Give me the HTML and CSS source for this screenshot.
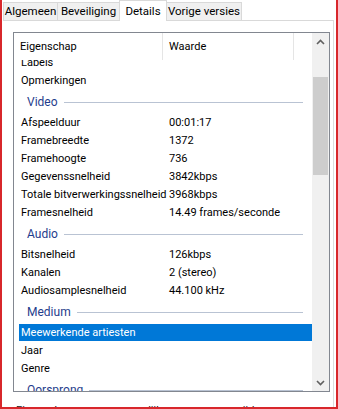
FILE: index.html
```html
<!DOCTYPE html>
<html lang="nl">
<head>
    <meta charset="UTF-8">
    <meta name="viewport" content="width=device-width, initial-scale=1.0">
    <title>Eigenschappen - Details</title>
    <link rel="stylesheet" href="styles.css">
</head>
<body>
    <div class="frame">
        <div class="tabs">
            <div class="tab tab-algemeen">Algemeen</div>
            <div class="tab tab-beveiliging">Beveiliging</div>
            <div class="tab tab-details active">Details</div>
            <div class="tab tab-vorige">Vorige versies</div>
        </div>
        <div class="panel">
            <div class="list">
                <div class="list-main">
                    <div class="header">
                        <div class="hcell">Eigenschap</div>
                        <div class="hcell hcell-value">Waarde</div>
                    </div>
                    <div class="rows">
                        <div class="rows-inner">
                            <div class="row"><span class="name">Labels</span><span class="value"></span></div>
                            <div class="row"><span class="name">Opmerkingen</span><span class="value"></span></div>

                            <div class="group"><span class="group-title">Video</span><span class="group-line"></span></div>
                            <div class="row"><span class="name">Afspeelduur</span><span class="value">00:01:17</span></div>
                            <div class="row"><span class="name">Framebreedte</span><span class="value">1372</span></div>
                            <div class="row"><span class="name">Framehoogte</span><span class="value">736</span></div>
                            <div class="row"><span class="name">Gegevenssnelheid</span><span class="value">3842kbps</span></div>
                            <div class="row"><span class="name">Totale bitverwerkingssnelheid</span><span class="value">3968kbps</span></div>
                            <div class="row"><span class="name">Framesnelheid</span><span class="value">14.49 frames/seconde</span></div>

                            <div class="group"><span class="group-title">Audio</span><span class="group-line"></span></div>
                            <div class="row"><span class="name">Bitsnelheid</span><span class="value">126kbps</span></div>
                            <div class="row"><span class="name">Kanalen</span><span class="value">2 (stereo)</span></div>
                            <div class="row"><span class="name">Audiosamplesnelheid</span><span class="value">44.100 kHz</span></div>

                            <div class="group"><span class="group-title">Medium</span><span class="group-line"></span></div>
                            <div class="row selected"><span class="name">Meewerkende artiesten</span><span class="value"></span></div>
                            <div class="row"><span class="name">Jaar</span><span class="value"></span></div>
                            <div class="row"><span class="name">Genre</span><span class="value"></span></div>

                            <div class="group"><span class="group-title">Oorsprong</span><span class="group-line"></span></div>
                        </div>
                    </div>
                </div>
                <div class="scrollbar">
                    <div class="sb-button">
                        <svg width="9" height="6" viewBox="0 0 9 6"><polyline points="1,5 4.5,1.5 8,5" fill="none" stroke="#606060" stroke-width="1.6"/></svg>
                    </div>
                    <div class="sb-track">
                        <div class="sb-thumb"></div>
                    </div>
                    <div class="sb-button">
                        <svg width="9" height="6" viewBox="0 0 9 6"><polyline points="1,1 4.5,4.5 8,1" fill="none" stroke="#606060" stroke-width="1.6"/></svg>
                    </div>
                </div>
            </div>
            <div class="remove-link">Eigenschappen en persoonlijke gegevens verwijderen</div>
        </div>
    </div>
</body>
</html>
```

FILE: styles.css
```css
body {
    margin: 0;
    font-family: Roboto, "Liberation Sans", sans-serif;
    font-size: 11px;
    color: #000;
    background: #fff;
}

.frame {
    width: 338px;
    height: 409px;
    box-sizing: border-box;
    border: 2px solid #d8272b;
    border-top: none;
    padding: 0 0 0 1px;
    overflow: hidden;
    background: #fff;
    display: flex;
    flex-direction: column;
}

/* tab strip */
.tabs {
    display: flex;
    align-items: flex-end;
    height: 20px;
    flex-shrink: 0;
}

.tab {
    height: 18px;
    box-sizing: border-box;
    border: 1px solid #d9d9d9;
    border-bottom: none;
    background: #f0f0f0;
    margin-right: -1px;
    line-height: 17px;
    text-align: center;
    white-space: nowrap;
    font-size: 11.5px;
}

.tab-algemeen { width: 55px; }
.tab-beveiliging { width: 63px; }
.tab-details { width: 48px; }
.tab-vorige { width: 76px; }

.tab.active {
    height: 21px;
    margin-bottom: -1px;
    background: #fff;
    position: relative;
    z-index: 1;
    line-height: 20px;
    padding-bottom: 2px;
}

/* tab page */
.panel {
    flex: 1;
    border-top: 1px solid #d9d9d9;
    border-right: 1px solid #dcdcdc;
    margin-right: 2px;
    padding: 11px 3px 0 10px;
    display: flex;
    flex-direction: column;
}

.list {
    height: 360px;
    box-sizing: border-box;
    border: 1px solid #828790;
    display: flex;
    flex-shrink: 0;
}

.list-main {
    flex: 1;
    display: flex;
    flex-direction: column;
    min-width: 0;
}

.header {
    height: 27px;
    display: grid;
    grid-template-columns: 149px 131px;
    flex-shrink: 0;
    background: #fff;
}

.hcell {
    padding-left: 6px;
    line-height: 27px;
    border-right: 1px solid #e5e5e5;
}

.hcell-value {
    padding-left: 6px;
}

.rows {
    flex: 1;
    overflow: hidden;
}

.rows-inner {
    margin-top: -6px;
    padding-left: 5px;
}

.row {
    display: grid;
    grid-template-columns: 144px 132px;
    height: 17px;
    margin-bottom: 1px;
    line-height: 17px;
    white-space: nowrap;
}

.row .name {
    padding-left: 2px;
}

.row .value {
    padding-left: 6px;
}

.row.selected {
    background: #0078d7;
    color: #fff;
}

.group {
    height: 24px;
    display: flex;
    align-items: center;
    width: 284px;
    padding-left: 8px;
    box-sizing: border-box;
}

.group-title {
    color: #1f3d8c;
    font-size: 12px;
    margin-right: 6px;
}

.group-line {
    flex: 1;
    height: 1px;
    background: #b9c3d3;
    margin-top: 1px;
}

/* vertical scrollbar */
.scrollbar {
    width: 17px;
    background: #f0f0f0;
    display: flex;
    flex-direction: column;
}

.sb-button {
    height: 17px;
    display: flex;
    align-items: center;
    justify-content: center;
}

.sb-track {
    flex: 1;
    padding: 27px 1px 0 1px;
}

.sb-thumb {
    height: 98px;
    background: #cdcdcd;
}

.remove-link {
    margin-top: 12px;
    padding-left: 3px;
    white-space: nowrap;
    color: #222;
}
```
